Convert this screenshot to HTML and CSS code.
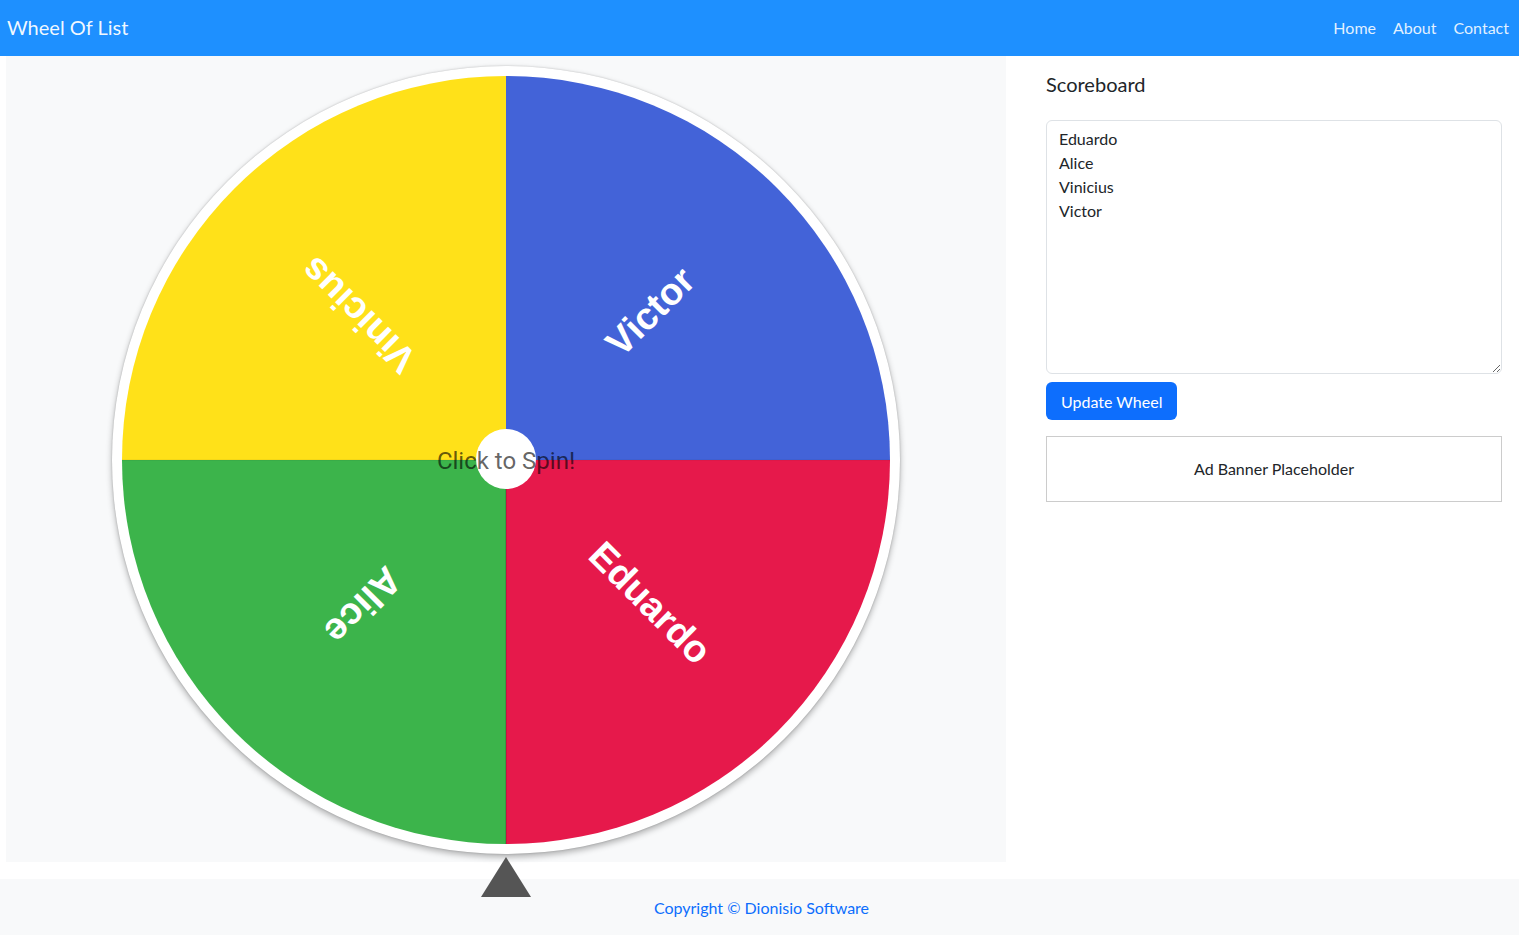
FILE: index.html
```html
<!DOCTYPE html>
<html lang="en">
<head>
<meta charset="utf-8">
<title>Wheel Of List</title>
<link rel="stylesheet" href="styles.css">
</head>
<body>
<nav class="navbar">
  <a class="brand" href="#">Wheel Of List</a>
  <ul class="nav-links">
    <li><a href="#">Home</a></li>
    <li><a href="#">About</a></li>
    <li><a href="#">Contact</a></li>
  </ul>
</nav>
<main class="main">
  <section class="wheel-panel">
    <div class="wheel">
      <svg class="wheel-svg" width="768" height="768" viewBox="0 0 768 768">
        <path d="M384,384 L384,0 A384,384 0 0 1 768,384 Z" fill="#4363d8"/>
        <path d="M384,384 L768,384 A384,384 0 0 1 384,768 Z" fill="#e6194b"/>
        <path d="M384,384 L384,768 A384,384 0 0 1 0,384 Z" fill="#3cb44b"/>
        <path d="M384,384 L0,384 A384,384 0 0 1 384,0 Z" fill="#ffe119"/>
        <line x1="384" y1="384" x2="384" y2="768" stroke="rgba(0,0,0,0.25)" stroke-width="1"/>
        <line x1="0" y1="384" x2="768" y2="384" stroke="rgba(0,0,0,0.08)" stroke-width="1"/>
        <g class="labels">
          <text transform="translate(384 384) rotate(-45) translate(207 0)" dy="-3">Victor</text>
          <text transform="translate(384 384) rotate(45) translate(203 0)" dy="-1">Eduardo</text>
          <text transform="translate(384 384) rotate(135) translate(204 0)" dy="-2">Alice</text>
          <text transform="translate(384 384) rotate(225) translate(207 0)" dy="-2">Vinicius</text>
        </g>
      </svg>
      <div class="hub"></div>
      <div class="spin-label">Click to Spin!</div>
    </div>
    <div class="pointer"></div>
  </section>
  <aside class="sidebar">
    <h5 class="title">Scoreboard</h5>
    <textarea class="names" rows="10">Eduardo
Alice
Vinicius
Victor</textarea>
    <button class="btn" type="button">Update Wheel</button>
    <div class="ad">Ad Banner Placeholder</div>
  </aside>
</main>
<footer class="footer">
  <a href="#">Copyright © Dionisio Software</a>
</footer>
</body>
</html>
```
FILE: styles.css
```css
* { box-sizing: border-box; }
html, body { margin: 0; padding: 0; }
body {
  font-family: Lato, "Noto Sans", "Liberation Sans", sans-serif;
  color: #212529;
  background: #fff;
  overflow: hidden;
}
a { text-decoration: none; }

.navbar {
  height: 56px;
  background: #1e90ff;
  display: flex;
  align-items: center;
  justify-content: space-between;
  padding: 0 10px 0 7px;
}
.brand {
  color: rgba(255,255,255,0.95);
  font-size: 20px;
  line-height: 24px;
  margin-top: -2px;
}
.nav-links {
  list-style: none;
  margin: -2px 0 0;
  padding: 0;
  display: flex;
  gap: 17px;
}
.nav-links a {
  color: rgba(255,255,255,0.88);
  font-size: 16px;
}

.main {
  display: flex;
  padding: 0 17px 0 6px;
}
.wheel-panel {
  position: relative;
  width: 1000px;
  height: 806px;
  background: #f8f9fa;
  display: flex;
  justify-content: center;
  padding-top: 10px;
}
.wheel {
  position: relative;
  width: 788px;
  height: 788px;
  border-radius: 50%;
  background: #fff;
  box-shadow: 0 3px 6px rgba(0,0,0,0.3), 0 0 2px rgba(0,0,0,0.2);
  display: flex;
  align-items: center;
  justify-content: center;
}
.wheel-svg { display: block; }
.labels text {
  font-family: "Liberation Sans", Arial, sans-serif;
  font-weight: bold;
  font-size: 38px;
  fill: #fff;
  text-anchor: middle;
  dominant-baseline: central;
}
.hub {
  position: absolute;
  left: 364px;
  top: 363px;
  width: 60px;
  height: 60px;
  border-radius: 50%;
  background: #fff;
}
.spin-label {
  position: absolute;
  left: 0;
  right: 0;
  top: 381px;
  text-align: center;
  font-family: Roboto, "Liberation Sans", sans-serif;
  font-size: 24px;
  line-height: 28px;
  color: rgba(0,0,0,0.62);
}
.pointer {
  position: absolute;
  z-index: 2;
  left: 475px;
  top: 801px;
  width: 0;
  height: 0;
  border-left: 25px solid transparent;
  border-right: 25px solid transparent;
  border-bottom: 40px solid #555;
}

.sidebar {
  flex: 1;
  margin-left: 40px;
  padding-top: 16px;
  display: flex;
  flex-direction: column;
  align-items: flex-start;
}
.title {
  margin: 0 0 24px;
  font-size: 20px;
  line-height: 24px;
  font-weight: 400;
}
.names {
  width: 100%;
  height: 254px;
  border: 1px solid #dee2e6;
  border-radius: 6px;
  padding: 6px 12px;
  font-family: inherit;
  font-size: 16px;
  line-height: 24px;
  color: #212529;
  resize: vertical;
  background: #fff;
}
.btn {
  margin-top: 8px;
  height: 38px;
  padding: 0 15px;
  border: 0;
  border-radius: 6px;
  background: #0d6efd;
  color: #fff;
  font-family: inherit;
  font-size: 16px;
}
.ad {
  margin-top: 16px;
  width: 100%;
  height: 66px;
  border: 1px solid #ccc;
  display: flex;
  align-items: center;
  justify-content: center;
  font-size: 16px;
  padding-bottom: 2px;
}

.footer {
  margin-top: 17px;
  height: 56px;
  background: #f8f9fa;
  display: flex;
  align-items: center;
  justify-content: center;
  padding-left: 4px;
}
.footer a {
  color: #0d6efd;
  font-size: 16px;
}
```
